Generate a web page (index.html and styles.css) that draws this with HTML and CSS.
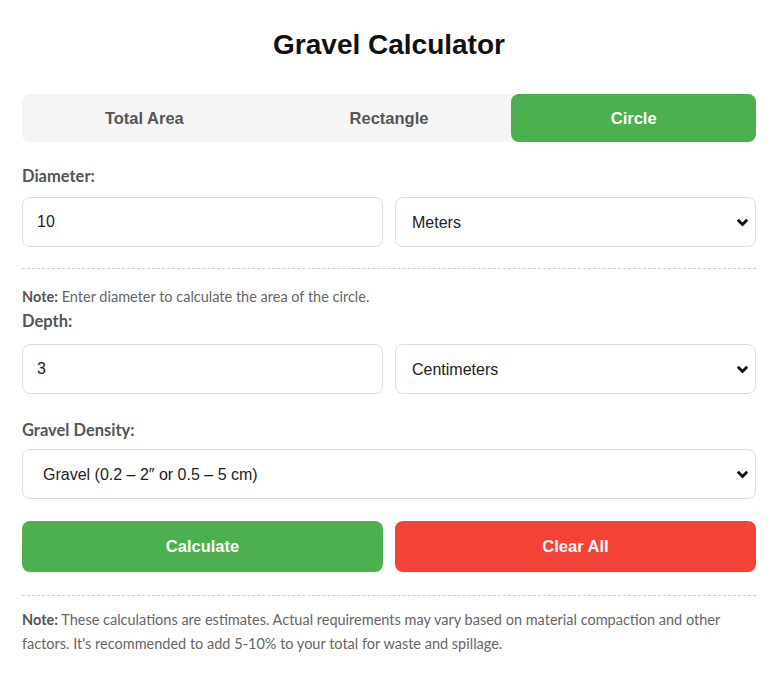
FILE: index.html
```html
<!DOCTYPE html>
<html lang="en">
<head>
  <meta charset="UTF-8">
  <title>Gravel Calculator</title>
  <link rel="stylesheet" href="styles.css">
</head>
<body>

  <div class="calc">
    <h1>Gravel Calculator</h1>

    <div class="tabs">
      <button class="tab">Total Area</button>
      <button class="tab">Rectangle</button>
      <button class="tab active">Circle</button>
    </div>

    <!-- circle -->
    <label class="label">Diameter:</label>
    <div class="row">
      <input type="text" value="10">
      <select>
        <option>Meters</option>
        <option>Feet</option>
      </select>
    </div>

    <hr class="dash">

    <p class="note small"><b>Note:</b> Enter diameter to calculate the area of the circle.</p>

    <label class="label">Depth:</label>
    <div class="row">
      <input type="text" value="3">
      <select>
        <option>Centimeters</option>
        <option>Inches</option>
      </select>
    </div>

    <label class="label label-gap">Gravel Density:</label>
    <select class="full">
      <option>Gravel (0.2 – 2″ or 0.5 – 5 cm)</option>
    </select>

    <div class="row buttons">
      <button class="btn btn-green">Calculate</button>
      <button class="btn btn-red">Clear All</button>
    </div>

    <hr class="dash dash-low">

    <p class="note">
      <b>Note:</b> These calculations are estimates. Actual requirements may vary based on material compaction and other
      factors. It's recommended to add 5-10% to your total for waste and spillage.
    </p>
  </div>

</body>
</html>
```

FILE: styles.css
```css
body {
  margin: 0;
  background: #fff;
  font-family: "Liberation Sans", Arial, sans-serif;
  color: #222;
}

.calc {
  padding: 28px 25px 20px 22px;
}

h1 {
  margin: 0 0 32px;
  font-size: 28px;
  line-height: 34px;
  text-align: center;
  color: #111;
}

.tabs {
  display: grid;
  grid-template-columns: 1fr 1fr 1fr;
  background: #f5f5f5;
  border-radius: 8px;
  height: 48px;
  margin-bottom: 24px;
}

.tab {
  border: none;
  background: transparent;
  font-family: "Liberation Sans", Arial, sans-serif;
  font-size: 16.5px;
  font-weight: bold;
  color: #555;
  border-radius: 8px;
  cursor: pointer;
}

.tab.active {
  background: #4caf50;
  color: #fff;
}

.label {
  display: block;
  font-family: Lato, "Open Sans", sans-serif;
  font-size: 16.5px;
  font-weight: bold;
  line-height: 20px;
  color: #555;
  margin-bottom: 11px;
}

.label-gap {
  margin-top: 26px;
  margin-bottom: 9px;
}

.row {
  display: grid;
  grid-template-columns: 1fr 1fr;
  gap: 12px;
}

input, select {
  box-sizing: border-box;
  height: 50px;
  width: 100%;
  border: 1px solid #ddd;
  border-radius: 8px;
  padding: 0 14px;
  font-family: "Liberation Sans", Arial, sans-serif;
  font-size: 16px;
  color: #222;
  background: #fff;
}

select {
  appearance: none;
  padding-left: 16px;
  background: #fff url("data:image/svg+xml,%3Csvg xmlns='http://www.w3.org/2000/svg' width='13' height='9' viewBox='0 0 13 9'%3E%3Cpath d='M1.8 1.8 6.5 6.5 11.2 1.8' fill='none' stroke='%23111' stroke-width='2.8'/%3E%3C/svg%3E") no-repeat right 6px center;
}

select.full {
  padding-left: 20px;
}

.dash {
  border: none;
  border-top: 1px dashed #ccc;
  margin: 21px 0 18px;
}

.dash-low {
  margin: 23px 0 12px;
}

.note {
  font-family: Lato, "Open Sans", sans-serif;
  font-size: 14.5px;
  line-height: 24px;
  color: #666;
  margin: 0;
}

.note b {
  color: #555;
}

.note.small {
  line-height: 20px;
  margin-bottom: 4px;
}

.note.small + .label {
  margin-bottom: 13px;
}

.buttons {
  margin-top: 22px;
}

.btn {
  height: 51px;
  border: none;
  border-radius: 8px;
  font-family: "Liberation Sans", Arial, sans-serif;
  font-size: 16.5px;
  font-weight: bold;
  color: #fff;
  cursor: pointer;
}

.btn-green {
  background: #4caf50;
}

.btn-red {
  background: #f44336;
}
```
